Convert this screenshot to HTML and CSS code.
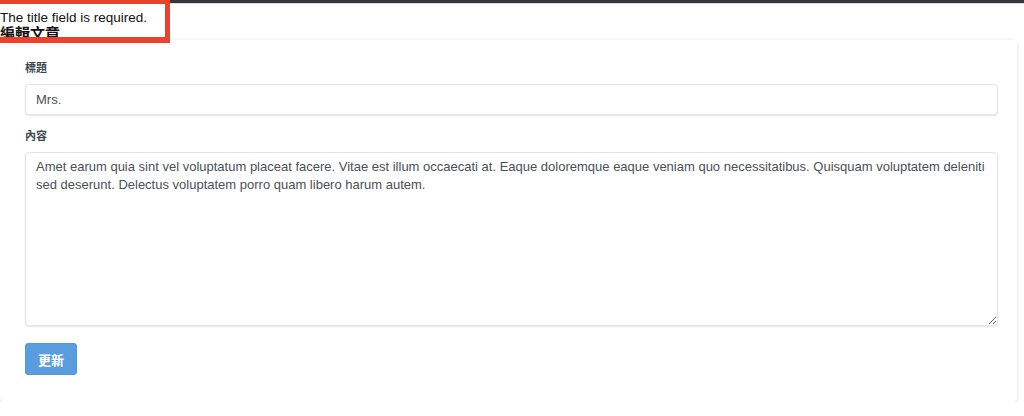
FILE: index.html
```html
<!DOCTYPE html>
<html lang="zh-Hant">
<head>
<meta charset="utf-8">
<title>編輯文章</title>
<link rel="stylesheet" href="styles.css">
</head>
<body>
<div class="topbar"></div>
<div class="alert">The title field is required.</div>
<div class="page">
  <h1 class="page-title">編輯文章</h1>
  <form class="card">
    <div class="field">
      <label class="label">標題</label>
      <input class="input" type="text" value="Mrs.">
    </div>
    <div class="field">
      <label class="label">內容</label>
      <textarea class="textarea">Amet earum quia sint vel voluptatum placeat facere. Vitae est illum occaecati at. Eaque doloremque eaque veniam quo necessitatibus. Quisquam voluptatem deleniti sed deserunt. Delectus voluptatem porro quam libero harum autem.</textarea>
    </div>
    <button class="btn" type="button">更新</button>
  </form>
</div>
</body>
</html>
```
FILE: styles.css
```css
html, body {
  margin: 0;
  padding: 0;
  background: #ffffff;
  font-family: "Liberation Sans", Arial, "Noto Sans CJK TC", sans-serif;
  color: #212529;
}
.topbar {
  height: 3px;
  background: #34383c;
  border-bottom: 1px solid #d9dde2;
}
.alert {
  position: absolute;
  top: 0;
  left: -5px;
  width: 165px;
  height: 27px;
  padding: 6px 0 0 0;
  border: 5px solid #ec412b;
  border-top-width: 4px;
  border-bottom-width: 6px;
  background: #ffffff;
  color: #111;
  font-size: 13.5px;
  line-height: 16px;
  box-sizing: content-box;
  z-index: 2;
  overflow: hidden;
}
.alert::after {
  content: "編輯文章";
  display: block;
  font-weight: bold;
  font-size: 15px;
  line-height: 16px;
  margin-top: 0;
}
.page {
  padding: 0 7px 0 0;
}
.page-title {
  margin: 0;
  height: 36px;
  font-size: 14px;
  visibility: hidden;
}
.card {
  display: flex;
  flex-direction: column;
  align-items: flex-start;
  background: #fff;
  border-radius: 4px;
  box-shadow: 0 1px 4px rgba(0,0,0,0.14);
  padding: 20px 19px 26px 25px;
  margin: 0;
}
.field {
  display: flex;
  flex-direction: column;
  width: 100%;
  margin-bottom: 13px;
}
.label {
  font-family: "Liberation Sans", "Noto Sans CJK TC", sans-serif;
  font-weight: bold;
  font-size: 11px;
  color: #3d4852;
  line-height: 16px;
  margin-bottom: 8px;
}
.input, .textarea {
  box-sizing: border-box;
  width: 100%;
  border: 1px solid #e3e5ea;
  border-radius: 4px;
  box-shadow: 0 1px 2px rgba(0,0,0,0.10);
  font-family: "Liberation Sans", Arial, sans-serif;
  font-size: 13px;
  color: #495057;
  background: #fff;
  margin: 0;
}
.input {
  height: 31px;
  padding: 0 10px;
}
.textarea {
  height: 174px;
  padding: 5px 10px;
  line-height: 18px;
  resize: vertical;
}
.field:nth-of-type(2) { margin-bottom: 17px; }
.btn {
  background: #5a9ddf;
  color: #fff;
  border: 1px solid #5598db;
  border-radius: 3px;
  font-family: "Liberation Sans", "Noto Sans CJK TC", sans-serif;
  font-weight: bold;
  font-size: 13px;
  width: 52px;
  height: 32px;
  padding: 0;
  cursor: pointer;
}
```
